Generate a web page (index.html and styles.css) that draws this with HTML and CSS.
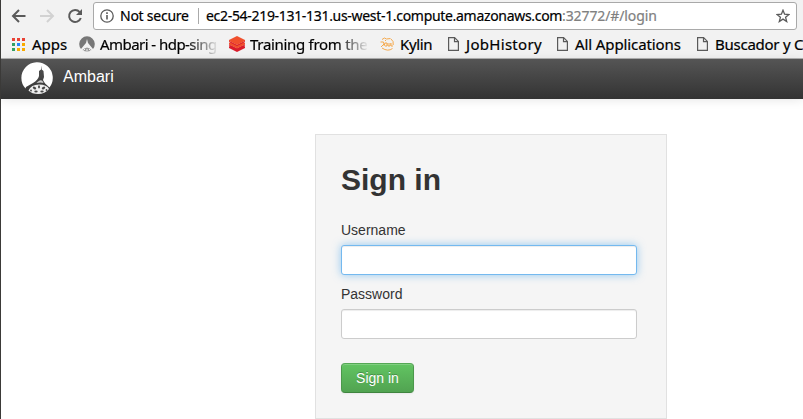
FILE: index.html
```
<!DOCTYPE html>
<html lang="en">
<head>
<meta charset="utf-8">
<title>Ambari</title>
<link rel="stylesheet" href="styles.css">
</head>
<body>
<div class="window">
  <header class="chrome">
    <div class="toolbar">
      <svg class="nav" viewBox="0 0 16 16"><path d="M14.500 8H2.500M8 2 2 8l6 6" fill="none" stroke="#5a5a5a" stroke-width="2"/></svg>
      <svg class="nav" viewBox="0 0 16 16"><path d="M1 8h12M8 2l6 6-6 6" fill="none" stroke="#d2d2d2" stroke-width="2"/></svg>
      <svg class="nav" viewBox="0 0 16 16"><path d="M12.700 4.100A6 6 0 1 0 13.800 10" fill="none" stroke="#5a5a5a" stroke-width="2"/><path d="M15 1v6H9z" fill="#5a5a5a"/></svg>
      <div class="omnibox">
        <svg class="info" viewBox="0 0 14 14"><circle cx="7" cy="7" r="6.200" fill="none" stroke="#5a5a5a" stroke-width="1.300"/><path d="M6.200 6h1.600v4.500H6.200zM6.200 3.300h1.600v1.600H6.200z" fill="#5a5a5a"/></svg>
        <span class="secure">Not secure</span>
        <span class="host">ec2-54-219-131-131.us-west-1.compute.amazonaws.com</span>
        <span class="path">:32772/#/login</span>
        <svg class="star" viewBox="0 0 14 14"><path d="M7 1.200 8.600 5.200l4.400.3-3.400 2.800 1.100 4.200L7 10.100l-3.700 2.400 1.100-4.200L1 5.500l4.400-.3z" fill="none" stroke="#5a5a5a" stroke-width="1.300"/></svg>
      </div>
    </div>
    <nav class="bookmarks">
      <a class="bm apps"><svg class="grid" viewBox="0 0 13 13"><path d="M0 0h3v3H0zM5 0h3v3H5zM10 0h3v3h-3z" fill="#e94235"/><path d="M0 5h3v3H0zM0 10h3v3H0z" fill="#34a064"/><path d="M5 5h3v3H5z" fill="#2684fc"/><path d="M10 5h3v3h-3zM5 10h3v3H5zM10 10h3v3h-3z" fill="#f9ab00"/></svg>Apps</a>
      <a class="bm ambari"><svg class="fav" viewBox="0 0 32 32"><path d="M4 26A15.500 15.500 0 1 1 28 26L23 20 18 14 16 6 14 14 9 20z" fill="#777"/><path d="M7 28q9-10 18 0-9 6-18 0z" fill="#999"/><path d="M12 22q4-2 8 0M9 29l3-3m4 4v-4m7 3-3-3" fill="none" stroke="#f2f2f2" stroke-width="2"/></svg>Ambari - hdp-sing</a>
      <a class="bm training"><svg class="fav" viewBox="0 0 16 16"><path d="m0 10.500 2-1 6 3 6-3 2 1v1.500l-8 4-8-4z" fill="#d91c2b"/><path d="m0 7 2-1 6 3 6-3 2 1v1.500l-8 4-8-4z" fill="#f0502d"/><path d="m0 8.500 8 4 8-4v1l-8 4-8-4z" fill="#d91c2b"/><path d="m8 0 8 4v1L8 9 0 5V4z" fill="#f0502d"/><path d="m0 5 8 4 8-4v1l-8 4-8-4z" fill="#d91c2b"/></svg>Training from the</a>
      <a class="bm kylin"><svg class="kylin-icon" viewBox="0 0 14 14"><g fill="none" stroke="#f5a94c" stroke-width="1"><path d="M2 2.500 4.500 1l2 1 4-.5M11 2q3 2 2.200 6M12.500 11.500Q8 15 2 11M.5 5h3l.5 2-3 3M4 9l1-3 2 0v3H5M8 6v3h2V6m1 0v3h2M5 3l1 1"/></g></svg>Kylin</a>
      <a class="bm job"><svg class="doc" viewBox="0 0 11 14"><path d="M.6.6h6L10.400 4.400v9H.6zM6.500.6v4h4" fill="none" stroke="#5a5a5a" stroke-width="1.200"/></svg>JobHistory</a>
      <a class="bm all"><svg class="doc" viewBox="0 0 11 14"><path d="M.6.6h6L10.400 4.400v9H.6zM6.500.6v4h4" fill="none" stroke="#5a5a5a" stroke-width="1.200"/></svg>All Applications</a>
      <a class="bm busc"><svg class="doc" viewBox="0 0 11 14"><path d="M.6.6h6L10.400 4.400v9H.6zM6.500.6v4h4" fill="none" stroke="#5a5a5a" stroke-width="1.200"/></svg>Buscador y Co</a>
    </nav>
  </header>
  <div class="navbar">
    <svg class="logo" viewBox="0 0 32 32"><path d="M4.500 26.500A15.700 15.700 0 1 1 28.500 25.500Q23 21 22 18L23 15 22.500 9 20.700 7.500V3.500L20 7.500 18 9V14Q17 18 12 21L5 25z" fill="#fff"/><path d="M16.500 20q3-3 5-1l1 2-3-.5-4 .5z" fill="#ccc"/><path d="M7.500 28.500Q10 22.500 18 22.500T28 27q-4 5-11 5-6 0-9.500-3.500z" fill="#eee"/><g fill="#484848"><ellipse cx="18" cy="24.800" rx="1" ry="1.600"/><ellipse cx="13.500" cy="26" rx="1.900" ry="1.200" transform="rotate(35 13.500 26)"/><ellipse cx="22.500" cy="26" rx="1.900" ry="1.200" transform="rotate(-35 22.500 26)"/><ellipse cx="15" cy="29.500" rx="1.700" ry="1.100"/><ellipse cx="21" cy="29.500" rx="1.700" ry="1.100"/><circle cx="10" cy="28.500" r=".9"/><circle cx="25.500" cy="28" r=".9"/></g></svg>
    <span class="brand">Ambari</span>
  </div>
  <main>
    <form class="well">
      <h1>Sign in</h1>
      <label for="user">Username</label>
      <input class="focus" id="user" type="text">
      <label for="pass">Password</label>
      <input id="pass" type="password">
      <button type="button">Sign in</button>
    </form>
  </main>
</div>
</body>
</html>
```
FILE: styles.css
```
* { box-sizing: border-box; }
body { margin: 0; background: #fff; overflow: hidden; font-family: "Liberation Sans", Arial, sans-serif; font-size: 14px; line-height: 20px; color: #333; }
svg { display: block; flex: none; }
.window { height: 419px; border-left: 1px solid #3b3a38; overflow: hidden; }
.chrome { height: 59px; background: #f2f2f2; border-bottom: 1px solid #b0b0b0; font-family: "Noto Sans", sans-serif; color: #000; white-space: nowrap; -webkit-text-stroke: .2px; }
.toolbar { display: flex; height: 30px; padding: 2px 6px 0 10px; }
.nav { width: 16px; height: 16px; margin: 6px 12px 0 0; }
.omnibox { display: flex; align-items: center; width: 704px; height: 28px; margin-left: -2px; padding: 0 6px; background: #fff; border: 1px solid #a9a9a9; border-radius: 3px; }
.info { width: 14px; height: 14px; margin-right: 6px; }
.secure { width: 79px; height: 16px; line-height: 16px; border-right: 1px solid #aaa; margin-right: 7px; letter-spacing: -.25px; }
.host { width: 356px; letter-spacing: -.31px; }
.path { flex: 1; color: #808080; letter-spacing: -.1px; }
.star { width: 14px; height: 14px; }
.bookmarks { display: flex; height: 28px; padding-left: 11px; font-size: 15px; }
.bm { display: flex; align-items: center; flex: none; }
.grid { width: 13px; height: 13px; margin-right: 7px; }
.fav { width: 16px; height: 16px; margin-right: 5px; }
.kylin-icon { width: 14px; height: 14px; margin-right: 6px; }
.doc { width: 11px; height: 14px; margin-right: 7px; }
.apps { width: 67px; }
.ambari { width: 138px; margin-right: 12px; letter-spacing: -.55px; mask-image: linear-gradient(90deg, #000 108px, transparent 140px); }
.training { width: 138px; margin-right: 13px; letter-spacing: -.3px; mask-image: linear-gradient(90deg, #000 108px, transparent 140px); }
.kylin { width: 68px; letter-spacing: -.35px; }
.job { width: 109px; letter-spacing: .3px; }
.all { width: 140px; letter-spacing: -.1px; }
.busc { width: 106px; letter-spacing: -.25px; }
.navbar { display: flex; align-items: flex-start; height: 40px; padding: 3px 0 0 20px; background: linear-gradient(#555, #333); box-shadow: 0 1px 10px rgba(0,0,0,.1); }
.logo { width: 32px; height: 32px; }
.brand { margin: 5px 0 0 10px; font-size: 16px; color: #fff; }
.well { width: 352px; height: 285px; margin: 35px 0 0 314px; padding: 25px; background: #f5f5f5; border: 1px solid #e1e1e1; }
h1 { margin: 0 0 20px; font-size: 30px; line-height: 40px; }
label { display: block; margin-bottom: 5px; }
input { display: block; width: 296px; height: 30px; margin: 0 0 9px; border: 1px solid #ccc; border-radius: 3px; background: #fff; box-shadow: inset 0 1px 1px rgba(0,0,0,.075); outline: 0; }
.focus { border-color: #74b9ef; box-shadow: inset 0 1px 1px rgba(0,0,0,.075), 0 0 8px rgba(82,168,236,.6); }
button { display: block; width: 73px; height: 30px; margin-top: 24px; padding: 0; font: 14px/20px "Liberation Sans", Arial, sans-serif; color: #fff; text-shadow: 0 -1px 0 rgba(0,0,0,.25); background: linear-gradient(#62c462, #51a351); border: 1px solid; border-color: #55a855 #4b984b #3f853f; border-radius: 4px; box-shadow: inset 0 1px 0 rgba(255,255,255,.2), 0 1px 2px rgba(0,0,0,.05); }
```
